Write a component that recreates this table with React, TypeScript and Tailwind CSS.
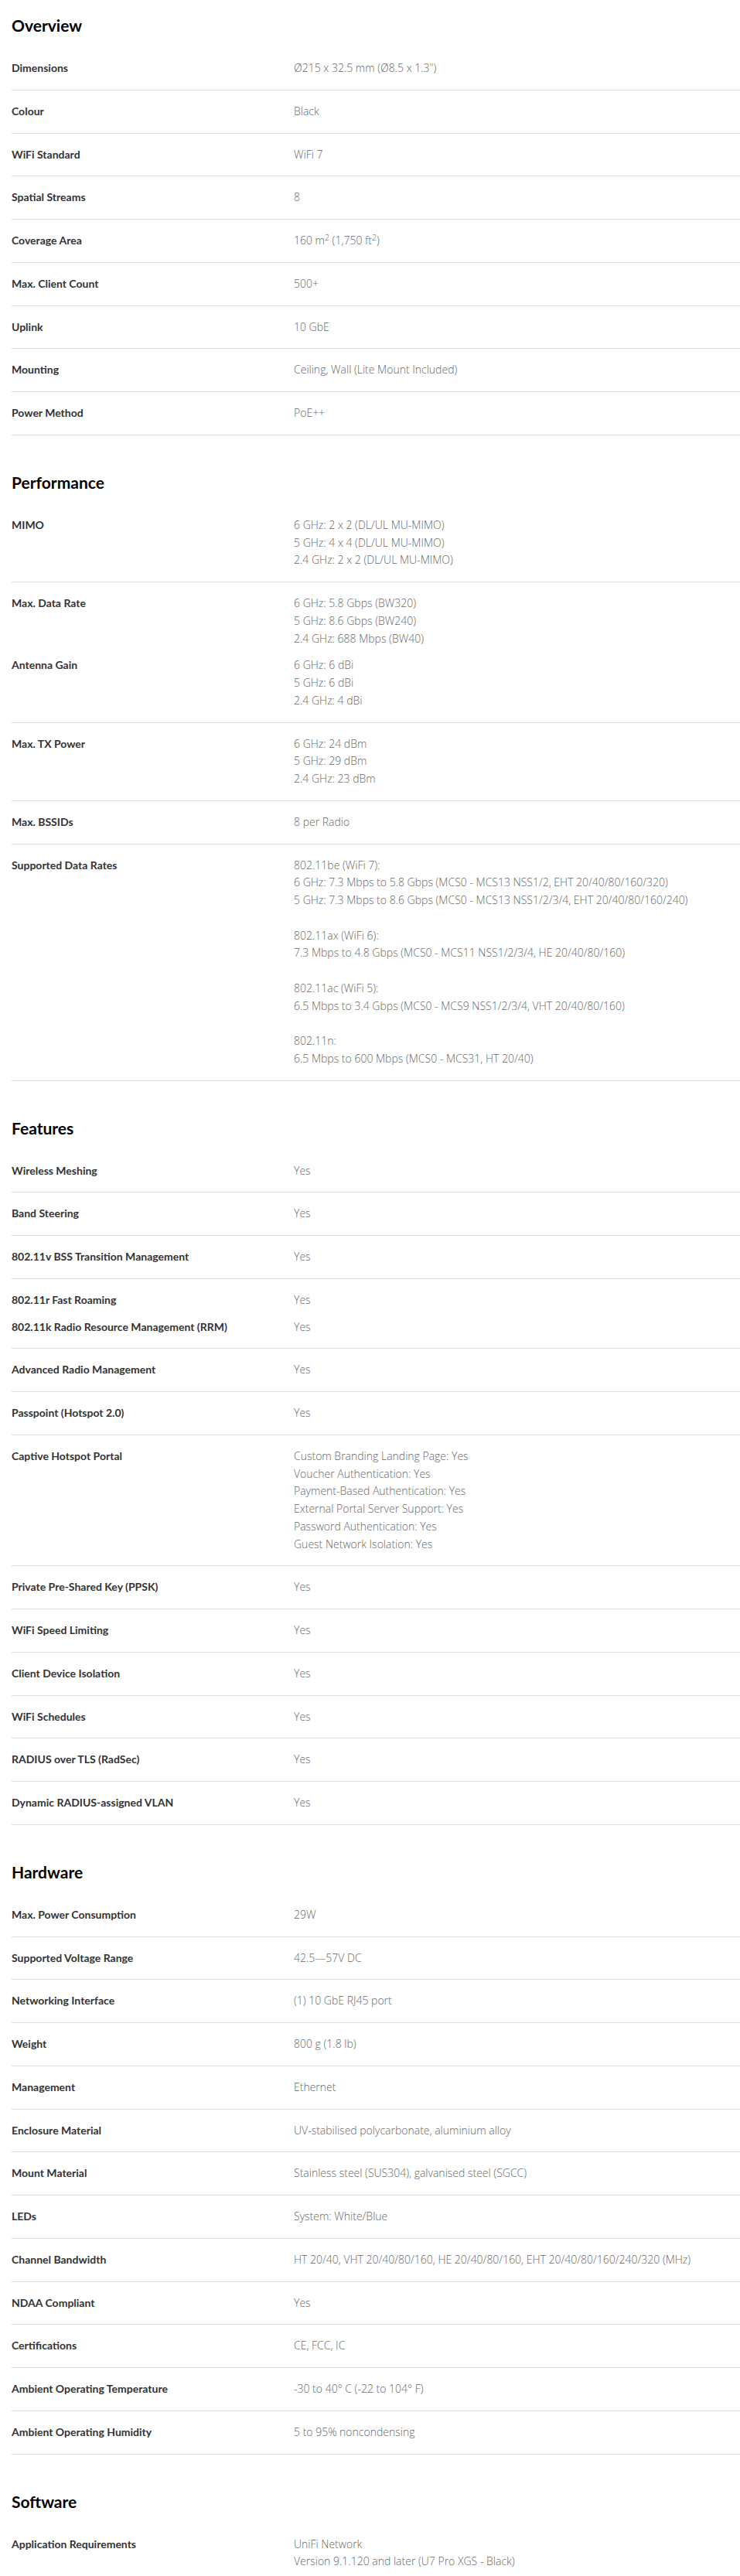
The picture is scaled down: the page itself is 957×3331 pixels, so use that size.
type Spec = {
  label: string;
  value: React.ReactNode;
  lines?: string[];
  noBorder?: boolean;
  tight?: boolean;
};

type Section = { title: string; rows: Spec[] };

const sections: Section[] = [
  {
    title: "Overview",
    rows: [
      { label: "Dimensions", value: 'Ø215 x 32.5 mm (Ø8.5 x 1.3")' },
      { label: "Colour", value: "Black" },
      { label: "WiFi Standard", value: "WiFi 7" },
      { label: "Spatial Streams", value: "8" },
      {
        label: "Coverage Area",
        value: (
          <>
            160 m<sup>2</sup> (1,750 ft<sup>2</sup>)
          </>
        ),
      },
      { label: "Max. Client Count", value: "500+" },
      { label: "Uplink", value: "10 GbE" },
      { label: "Mounting", value: "Ceiling, Wall (Lite Mount Included)" },
      { label: "Power Method", value: "PoE++" },
    ],
  },
  {
    title: "Performance",
    rows: [
      {
        label: "MIMO",
        value: null,
        lines: ["6 GHz: 2 x 2 (DL/UL MU-MIMO)", "5 GHz: 4 x 4 (DL/UL MU-MIMO)", "2.4 GHz: 2 x 2 (DL/UL MU-MIMO)"],
      },
      {
        label: "Max. Data Rate",
        value: null,
        lines: ["6 GHz: 5.8 Gbps (BW320)", "5 GHz: 8.6 Gbps (BW240)", "2.4 GHz: 688 Mbps (BW40)"],
        noBorder: true,
      },
      {
        label: "Antenna Gain",
        value: null,
        lines: ["6 GHz: 6 dBi", "5 GHz: 6 dBi", "2.4 GHz: 4 dBi"],
        tight: true,
      },
      {
        label: "Max. TX Power",
        value: null,
        lines: ["6 GHz: 24 dBm", "5 GHz: 29 dBm", "2.4 GHz: 23 dBm"],
      },
      { label: "Max. BSSIDs", value: "8 per Radio" },
      {
        label: "Supported Data Rates",
        value: null,
        lines: [
          "802.11be (WiFi 7):",
          "6 GHz: 7.3 Mbps to 5.8 Gbps (MCS0 - MCS13 NSS1/2, EHT 20/40/80/160/320)",
          "5 GHz: 7.3 Mbps to 8.6 Gbps (MCS0 - MCS13 NSS1/2/3/4, EHT 20/40/80/160/240)",
          "",
          "802.11ax (WiFi 6):",
          "7.3 Mbps to 4.8 Gbps (MCS0 - MCS11 NSS1/2/3/4, HE 20/40/80/160)",
          "",
          "802.11ac (WiFi 5):",
          "6.5 Mbps to 3.4 Gbps (MCS0 - MCS9 NSS1/2/3/4, VHT 20/40/80/160)",
          "",
          "802.11n:",
          "6.5 Mbps to 600 Mbps (MCS0 - MCS31, HT 20/40)",
        ],
      },
    ],
  },
  {
    title: "Features",
    rows: [
      { label: "Wireless Meshing", value: "Yes" },
      { label: "Band Steering", value: "Yes" },
      { label: "802.11v BSS Transition Management", value: "Yes" },
      { label: "802.11r Fast Roaming", value: "Yes", noBorder: true },
      { label: "802.11k Radio Resource Management (RRM)", value: "Yes", tight: true },
      { label: "Advanced Radio Management", value: "Yes" },
      { label: "Passpoint (Hotspot 2.0)", value: "Yes" },
      {
        label: "Captive Hotspot Portal",
        value: null,
        lines: [
          "Custom Branding Landing Page: Yes",
          "Voucher Authentication: Yes",
          "Payment-Based Authentication: Yes",
          "External Portal Server Support: Yes",
          "Password Authentication: Yes",
          "Guest Network Isolation: Yes",
        ],
      },
      { label: "Private Pre-Shared Key (PPSK)", value: "Yes" },
      { label: "WiFi Speed Limiting", value: "Yes" },
      { label: "Client Device Isolation", value: "Yes" },
      { label: "WiFi Schedules", value: "Yes" },
      { label: "RADIUS over TLS (RadSec)", value: "Yes" },
      { label: "Dynamic RADIUS-assigned VLAN", value: "Yes" },
    ],
  },
  {
    title: "Hardware",
    rows: [
      { label: "Max. Power Consumption", value: "29W" },
      { label: "Supported Voltage Range", value: "42.5—57V DC" },
      { label: "Networking Interface", value: "(1) 10 GbE RJ45 port" },
      { label: "Weight", value: "800 g (1.8 lb)" },
      { label: "Management", value: "Ethernet" },
      { label: "Enclosure Material", value: "UV-stabilised polycarbonate, aluminium alloy" },
      { label: "Mount Material", value: "Stainless steel (SUS304), galvanised steel (SGCC)" },
      { label: "LEDs", value: "System: White/Blue" },
      {
        label: "Channel Bandwidth",
        value: "HT 20/40, VHT 20/40/80/160, HE 20/40/80/160, EHT 20/40/80/160/240/320 (MHz)",
      },
      { label: "NDAA Compliant", value: "Yes" },
      { label: "Certifications", value: "CE, FCC, IC" },
      { label: "Ambient Operating Temperature", value: "-30 to 40° C (-22 to 104° F)" },
      { label: "Ambient Operating Humidity", value: "5 to 95% noncondensing" },
    ],
  },
  {
    title: "Software",
    rows: [
      {
        label: "Application Requirements",
        value: null,
        lines: ["UniFi Network", "Version 9.1.120 and later (U7 Pro XGS - Black)"],
      },
    ],
  },
];

export default function App() {
  return (
    <div className="min-h-screen bg-white pl-[15px]">
      {sections.map((section, i) => (
        <section key={section.title} className={i === 0 ? "pt-[19px]" : "pt-[47px]"}>
          <h2 className="mb-[14px] font-['Lato',sans-serif] text-[21px] font-bold leading-[28px] text-black">
            {section.title}
          </h2>
          <div>
            {section.rows.map((row) => (
              <SpecRow key={row.label} row={row} />
            ))}
          </div>
        </section>
      ))}
    </div>
  );
}

function SpecRow({ row }: { row: Spec }) {
  const spacing = row.noBorder ? "pt-4 pb-3" : row.tight ? "pt-0 pb-4 border-b border-[#dddddd]" : "py-4 border-b border-[#dddddd]";
  return (
    <div className={`flex ${spacing}`}>
      <div className="w-[365px] shrink-0 font-['Lato',sans-serif] text-[14px] font-bold leading-[22.75px] text-[#333333]">
        {row.label}
      </div>
      <div className="font-['Open_Sans',sans-serif] text-[14px] font-light leading-[22.75px] text-[#666666]">
        {row.lines
          ? row.lines.map((line, idx) => <div key={idx} className="min-h-[22.75px]">{line}</div>)
          : row.value}
      </div>
    </div>
  );
}
